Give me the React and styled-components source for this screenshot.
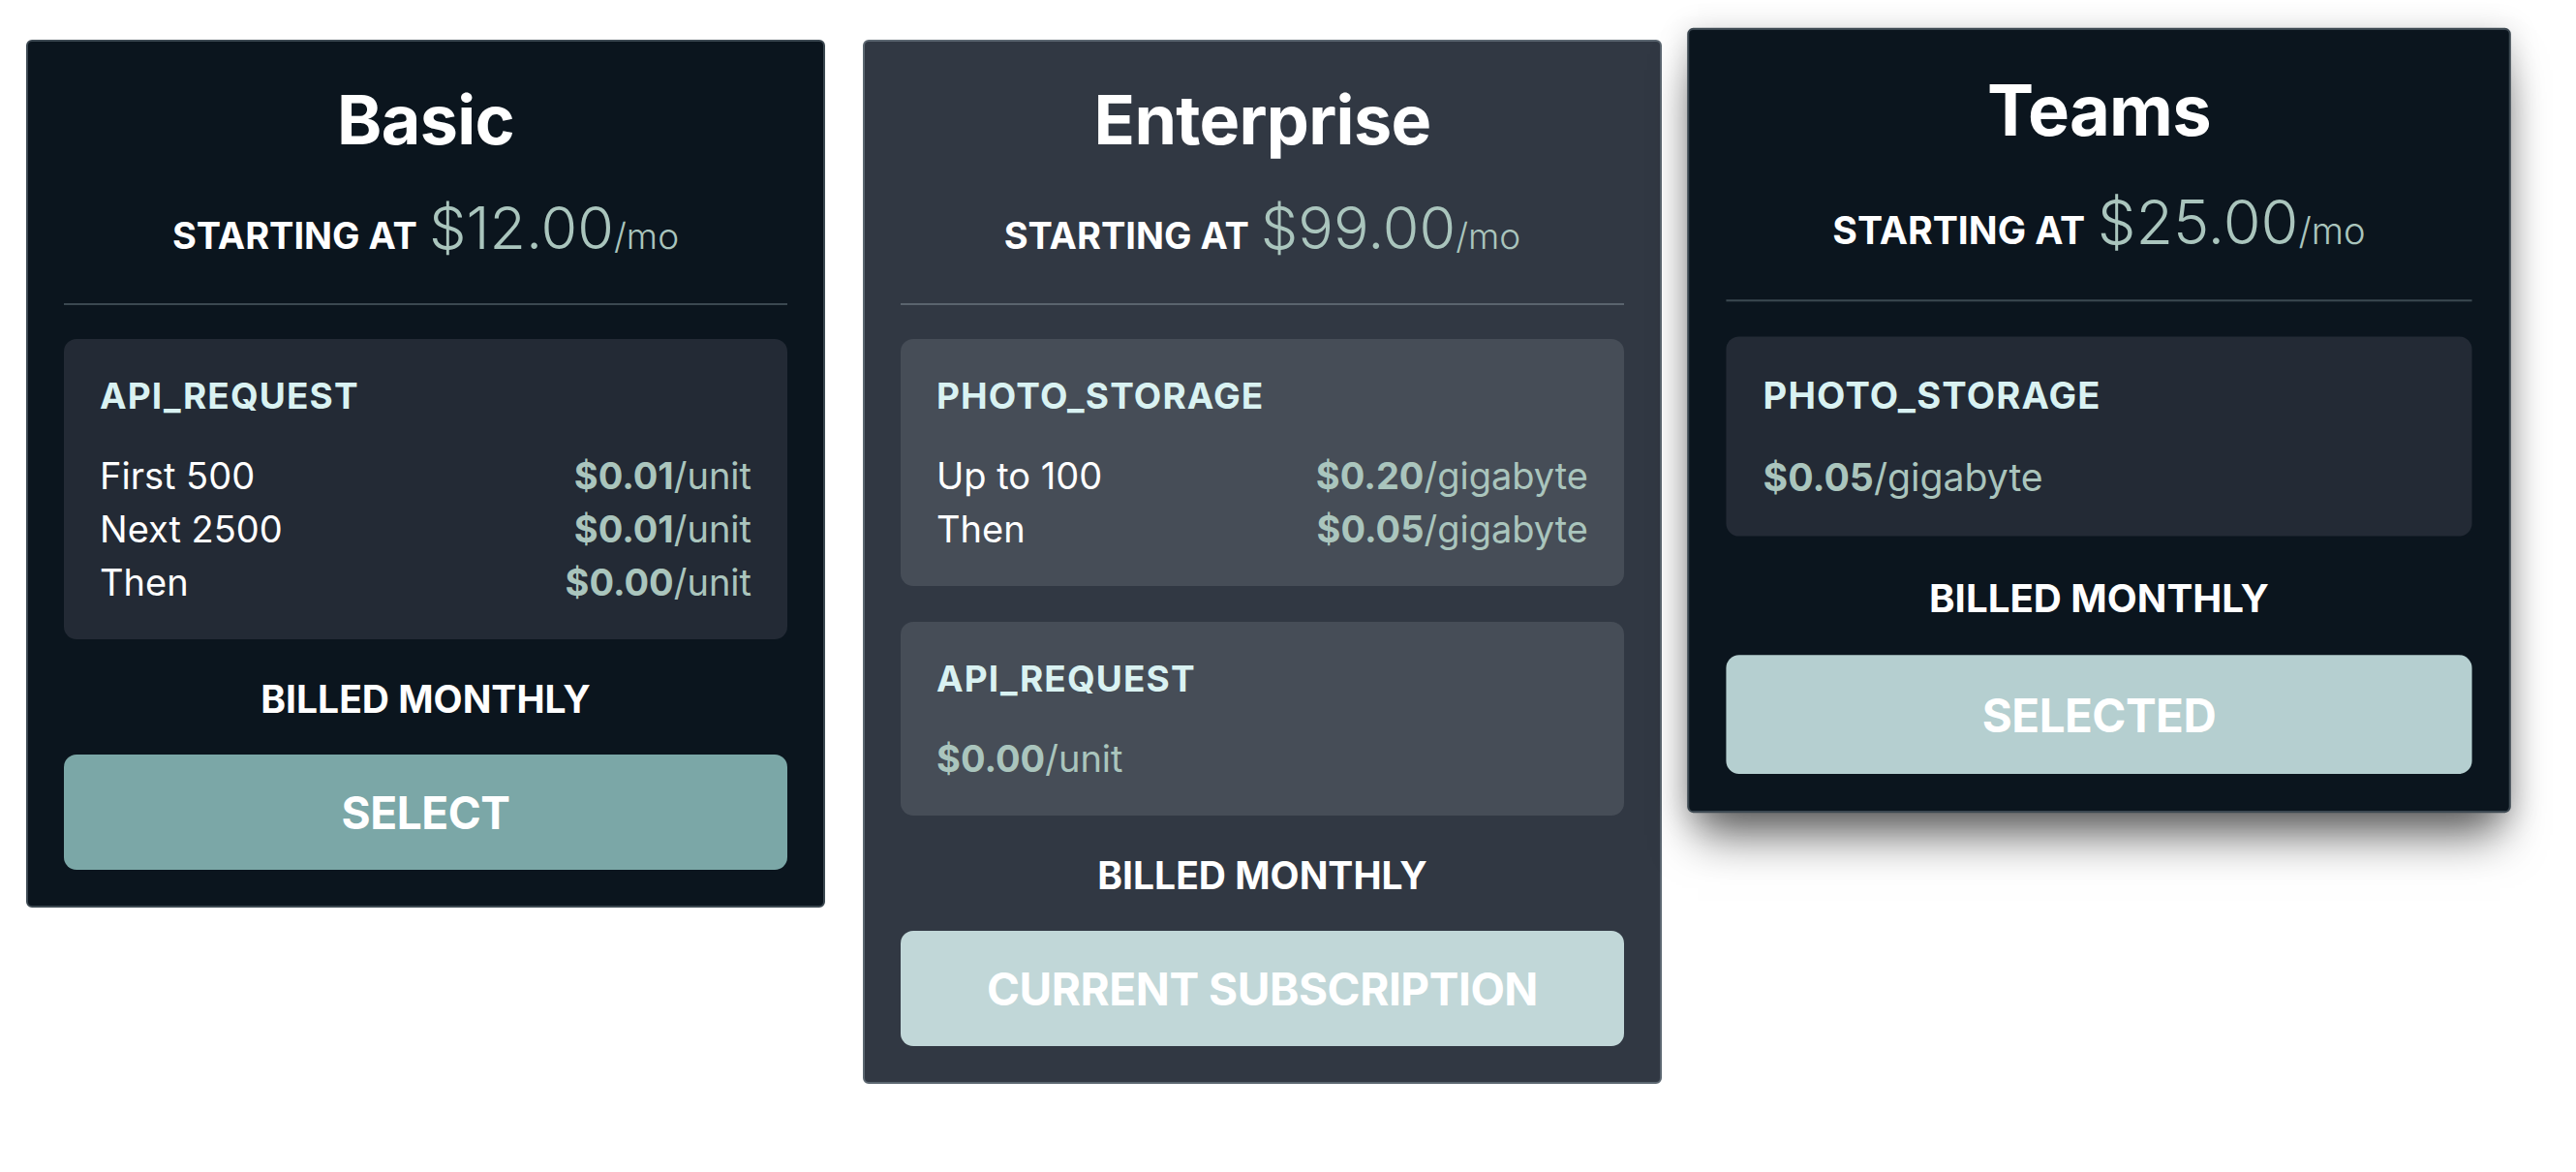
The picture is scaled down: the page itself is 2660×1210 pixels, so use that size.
import React from "react";
import styled, { createGlobalStyle, css } from "styled-components";

const GlobalStyle = createGlobalStyle`
  html, body {
    margin: 0;
    background: #ffffff;
    font-family: Inter, "Noto Sans", "Liberation Sans", sans-serif;
  }
`;

const plans = [
  {
    name: "Basic",
    price: "$12.00",
    tone: "dark",
    button: "SELECT",
    tiers: [
      {
        title: "API_REQUEST",
        rows: [
          { label: "First 500", amount: "$0.01", unit: "unit" },
          { label: "Next 2500", amount: "$0.01", unit: "unit" },
          { label: "Then", amount: "$0.00", unit: "unit" },
        ],
      },
    ],
  },
  {
    name: "Enterprise",
    price: "$99.00",
    tone: "slate",
    button: "CURRENT SUBSCRIPTION",
    tiers: [
      {
        title: "PHOTO_STORAGE",
        rows: [
          { label: "Up to 100", amount: "$0.20", unit: "gigabyte" },
          { label: "Then", amount: "$0.05", unit: "gigabyte" },
        ],
      },
      {
        title: "API_REQUEST",
        rows: [{ amount: "$0.00", unit: "unit" }],
      },
    ],
  },
  {
    name: "Teams",
    price: "$25.00",
    tone: "dark",
    selected: true,
    button: "SELECTED",
    tiers: [
      {
        title: "PHOTO_STORAGE",
        rows: [{ amount: "$0.05", unit: "gigabyte" }],
      },
    ],
  },
];

const tones = {
  dark: { bg: "#0b151e", border: "#3c4851", box: "#232a35", rule: "#3b4850" },
  slate: { bg: "#313843", border: "#5b6670", box: "#464d57", rule: "#5a646e" },
};

const buttonColors = {
  SELECT: "#7ba7a7",
  "CURRENT SUBSCRIPTION": "#c1d7d8",
  SELECTED: "#b5cfd0",
};

const Page = styled.div`
  display: flex;
  align-items: flex-start;
  gap: 39px;
  padding: 41px 0 0 27px;
`;

const Card = styled.div`
  box-sizing: border-box;
  width: 825px;
  flex-shrink: 0;
  display: flex;
  flex-direction: column;
  padding: 37px;
  border: 2px solid ${(p) => tones[p.$tone].border};
  border-radius: 6px;
  background: ${(p) => tones[p.$tone].bg};
  color: #ffffff;
  ${(p) =>
    p.$selected &&
    css`
      transform: scale(1.031);
      box-shadow: 0 32px 44px -10px rgba(0, 0, 0, 0.6),
        0 4px 30px rgba(0, 0, 0, 0.18);
    `}
`;

const PlanName = styled.h2`
  margin: 0;
  text-align: center;
  font-size: 70px;
  line-height: 88px;
  font-weight: 700;
  letter-spacing: -0.01em;
`;

const PriceLine = styled.div`
  margin-top: 31px;
  text-align: center;
  line-height: 72px;
  white-space: nowrap;
`;

const Starting = styled.span`
  font-size: 38px;
  font-weight: 700;
  margin-right: 12px;
`;

const Amount = styled.span`
  font-size: 61px;
  font-weight: 300;
  color: #aac5bd;
`;

const PerMonth = styled.span`
  font-size: 37px;
  font-weight: 300;
  color: #aac5bd;
`;

const Rule = styled.hr`
  margin: 26px 0 35px;
  border: 0;
  height: 2px;
  background: ${(p) => tones[p.$tone].rule};
`;

const TierList = styled.div`
  display: flex;
  flex-direction: column;
  gap: 37px;
`;

const Tier = styled.div`
  padding: 36px 37px 31px;
  border-radius: 13px;
  background: ${(p) => tones[p.$tone].box};
`;

const TierTitle = styled.div`
  font-size: 37px;
  line-height: 45px;
  font-weight: 700;
  letter-spacing: 0.03em;
  color: #d9f2f2;
  margin-bottom: 33px;
`;

const Row = styled.div`
  display: flex;
  justify-content: space-between;
  font-size: 38px;
  line-height: 55px;
`;

const Label = styled.span`
  color: #ffffff;
`;

const Rate = styled.span`
  color: #aac5bd;
  b {
    font-weight: 700;
  }
`;

const Billed = styled.div`
  margin-top: 38px;
  text-align: center;
  font-size: 39px;
  line-height: 48px;
  font-weight: 700;
`;

const ActionButton = styled.button`
  margin-top: 33px;
  height: 119px;
  border: 0;
  border-radius: 13px;
  background: ${(p) => p.$bg};
  color: #ffffff;
  font-family: inherit;
  font-size: 46px;
  font-weight: 700;
  letter-spacing: -0.01em;
  cursor: pointer;
`;

const PlanCard = ({ plan }) => (
  <Card $tone={plan.tone} $selected={plan.selected}>
    <PlanName>{plan.name}</PlanName>
    <PriceLine>
      <Starting>STARTING AT</Starting>
      <Amount>{plan.price}</Amount>
      <PerMonth>/mo</PerMonth>
    </PriceLine>
    <Rule $tone={plan.tone} />
    <TierList>
      {plan.tiers.map((tier) => (
        <Tier key={tier.title} $tone={plan.tone}>
          <TierTitle>{tier.title}</TierTitle>
          {tier.rows.map((row, i) => (
            <Row key={i}>
              {row.label && <Label>{row.label}</Label>}
              <Rate>
                <b>{row.amount}</b>/{row.unit}
              </Rate>
            </Row>
          ))}
        </Tier>
      ))}
    </TierList>
    <Billed>BILLED MONTHLY</Billed>
    <ActionButton $bg={buttonColors[plan.button]}>{plan.button}</ActionButton>
  </Card>
);

export default function App() {
  return (
    <>
      <GlobalStyle />
      <Page>
        {plans.map((plan) => (
          <PlanCard key={plan.name} plan={plan} />
        ))}
      </Page>
    </>
  );
}
